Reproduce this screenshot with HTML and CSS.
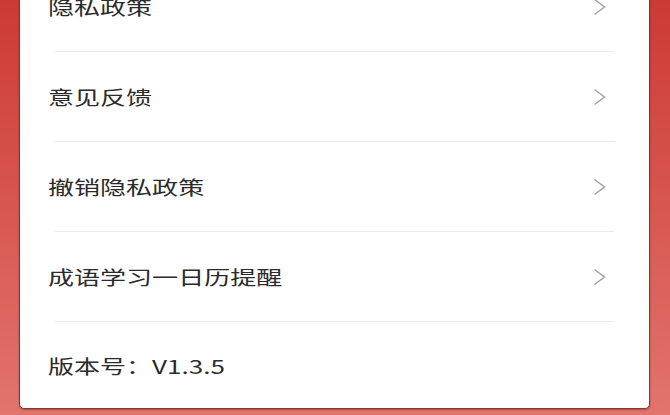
FILE: index.html
```html
<!doctype html>
<html lang="zh-CN">
  <head>
    <meta charset="utf-8">
    <meta name="viewport" content="width=device-width, user-scalable=no">
    <title>设置</title>
    <link rel="stylesheet" href="styles.css">
  </head>
  <body>
    <div id="card">
      <div class="item">
        <span class="label">隐私政策</span>
        <svg class="arrow" width="13" height="18" viewBox="0 0 13 18"><polyline points="1.5,1.5 11.5,9 1.5,16.5"/></svg>
      </div>
      <div class="line"></div>

      <div class="item">
        <span class="label">意见反馈</span>
        <svg class="arrow" width="13" height="18" viewBox="0 0 13 18"><polyline points="1.5,1.5 11.5,9 1.5,16.5"/></svg>
      </div>
      <div class="line"></div>

      <div class="item">
        <span class="label">撤销隐私政策</span>
        <svg class="arrow" width="13" height="18" viewBox="0 0 13 18"><polyline points="1.5,1.5 11.5,9 1.5,16.5"/></svg>
      </div>
      <div class="line"></div>

      <div class="item">
        <span class="label">成语学习一日历提醒</span>
        <svg class="arrow" width="13" height="18" viewBox="0 0 13 18"><polyline points="1.5,1.5 11.5,9 1.5,16.5"/></svg>
      </div>
      <div class="line"></div>

      <div class="item last">
        <span class="label">版本号：V1.3.5</span>
      </div>
    </div>
  </body>
</html>
```

FILE: styles.css
```css
* { box-sizing: border-box; }

html, body {
  margin: 0;
  height: 100%;
  overflow: hidden;
}

body {
  padding: 0 20px 0 19px;
  background: linear-gradient(to bottom, #cd3a34, #e2746d);
  font-family: "Noto Sans CJK SC", "Noto Sans", sans-serif;
  color: #2b2b2b;
}

#card {
  margin-top: -39px;
  background: #fff;
  border: 1px solid #8c3530;
  border-radius: 5px;
  box-shadow: 0 1px 2px rgba(0, 0, 0, 0.3);
}

.item {
  display: flex;
  align-items: center;
  justify-content: space-between;
  height: 89px;
  padding: 0 43px 0 28px;
}

.item.last {
  height: 86px;
}

.label {
  display: inline-block;
  font-size: 19px;
  line-height: 1;
  transform: scaleX(1.37);
  transform-origin: left center;
}

.arrow polyline {
  fill: none;
  stroke: #a3a3a3;
  stroke-width: 1.5;
}

.line {
  height: 1px;
  margin: 0 35px;
  background: #ebebeb;
}
```
